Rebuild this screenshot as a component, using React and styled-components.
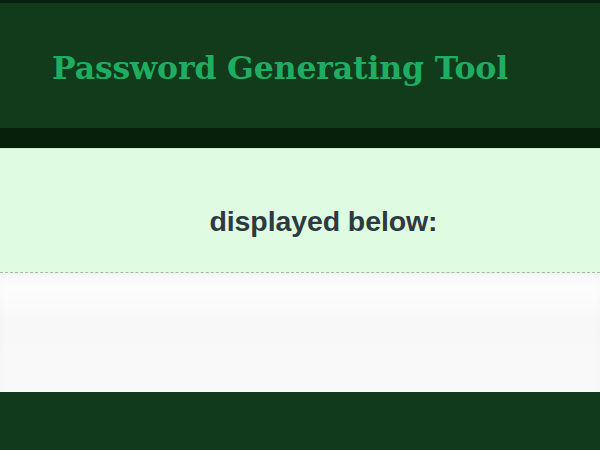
import React from 'react'
import styled, { createGlobalStyle } from 'styled-components';

const GlobalStyle = createGlobalStyle`
  html, body {
    margin: 0;
    padding: 0;
    background: #103a1b;
  }
`;

const Page = styled.div`
  width: 600px;
  height: 450px;
  display: flex;
  flex-direction: column;
  overflow: hidden;
  background-color: #103a1b;
`;

const Header = styled.header`
  height: 128px;
  border-top: 3px solid #07220d;
  background-color: #113b1a;
  display: flex;
  align-items: center;
  padding-left: 52px;
  padding-top: 3px;
  box-sizing: border-box;
`;

const Title = styled.h1`
  margin: 0;
  font-family: "DejaVu Serif", Georgia, serif;
  font-weight: bold;
  font-size: 31.5px;
  letter-spacing: -0.15px;
  color: #1fad63;
`;

const Shade = styled.div`
  height: 20px;
  background-color: #06200b;
`;

const Notice = styled.section`
  height: 125px;
  background-color: #dffce3;
  border-top: 1px solid #c9eccf;
  border-bottom: 1px dashed #a9b5ad;
  display: flex;
  align-items: center;
  justify-content: center;
  box-sizing: border-box;
`;

const NoticeText = styled.p`
  margin: 22px 0 0 47px;
  font-family: "Liberation Sans", Arial, sans-serif;
  font-weight: bold;
  font-size: 28.5px;
  letter-spacing: -0.1px;
  color: #2d3a42;
`;

const Output = styled.div`
  height: 119px;
  background: linear-gradient(#ffffff, #f8f8f8 40%, #f9f9f9);
  box-shadow: inset 0 10px 16px -8px rgba(0, 0, 0, 0.07);
`;

const Footer = styled.footer`
  flex: 1;
  background-color: #103a1b;
`;

export default function App() {
  return (
    <Page>
      <GlobalStyle />
      <Header>
        <Title>Password Generating Tool</Title>
      </Header>
      <Shade />
      <Notice>
        <NoticeText>displayed below:</NoticeText>
      </Notice>
      <Output />
      <Footer />
    </Page>
  );
};
